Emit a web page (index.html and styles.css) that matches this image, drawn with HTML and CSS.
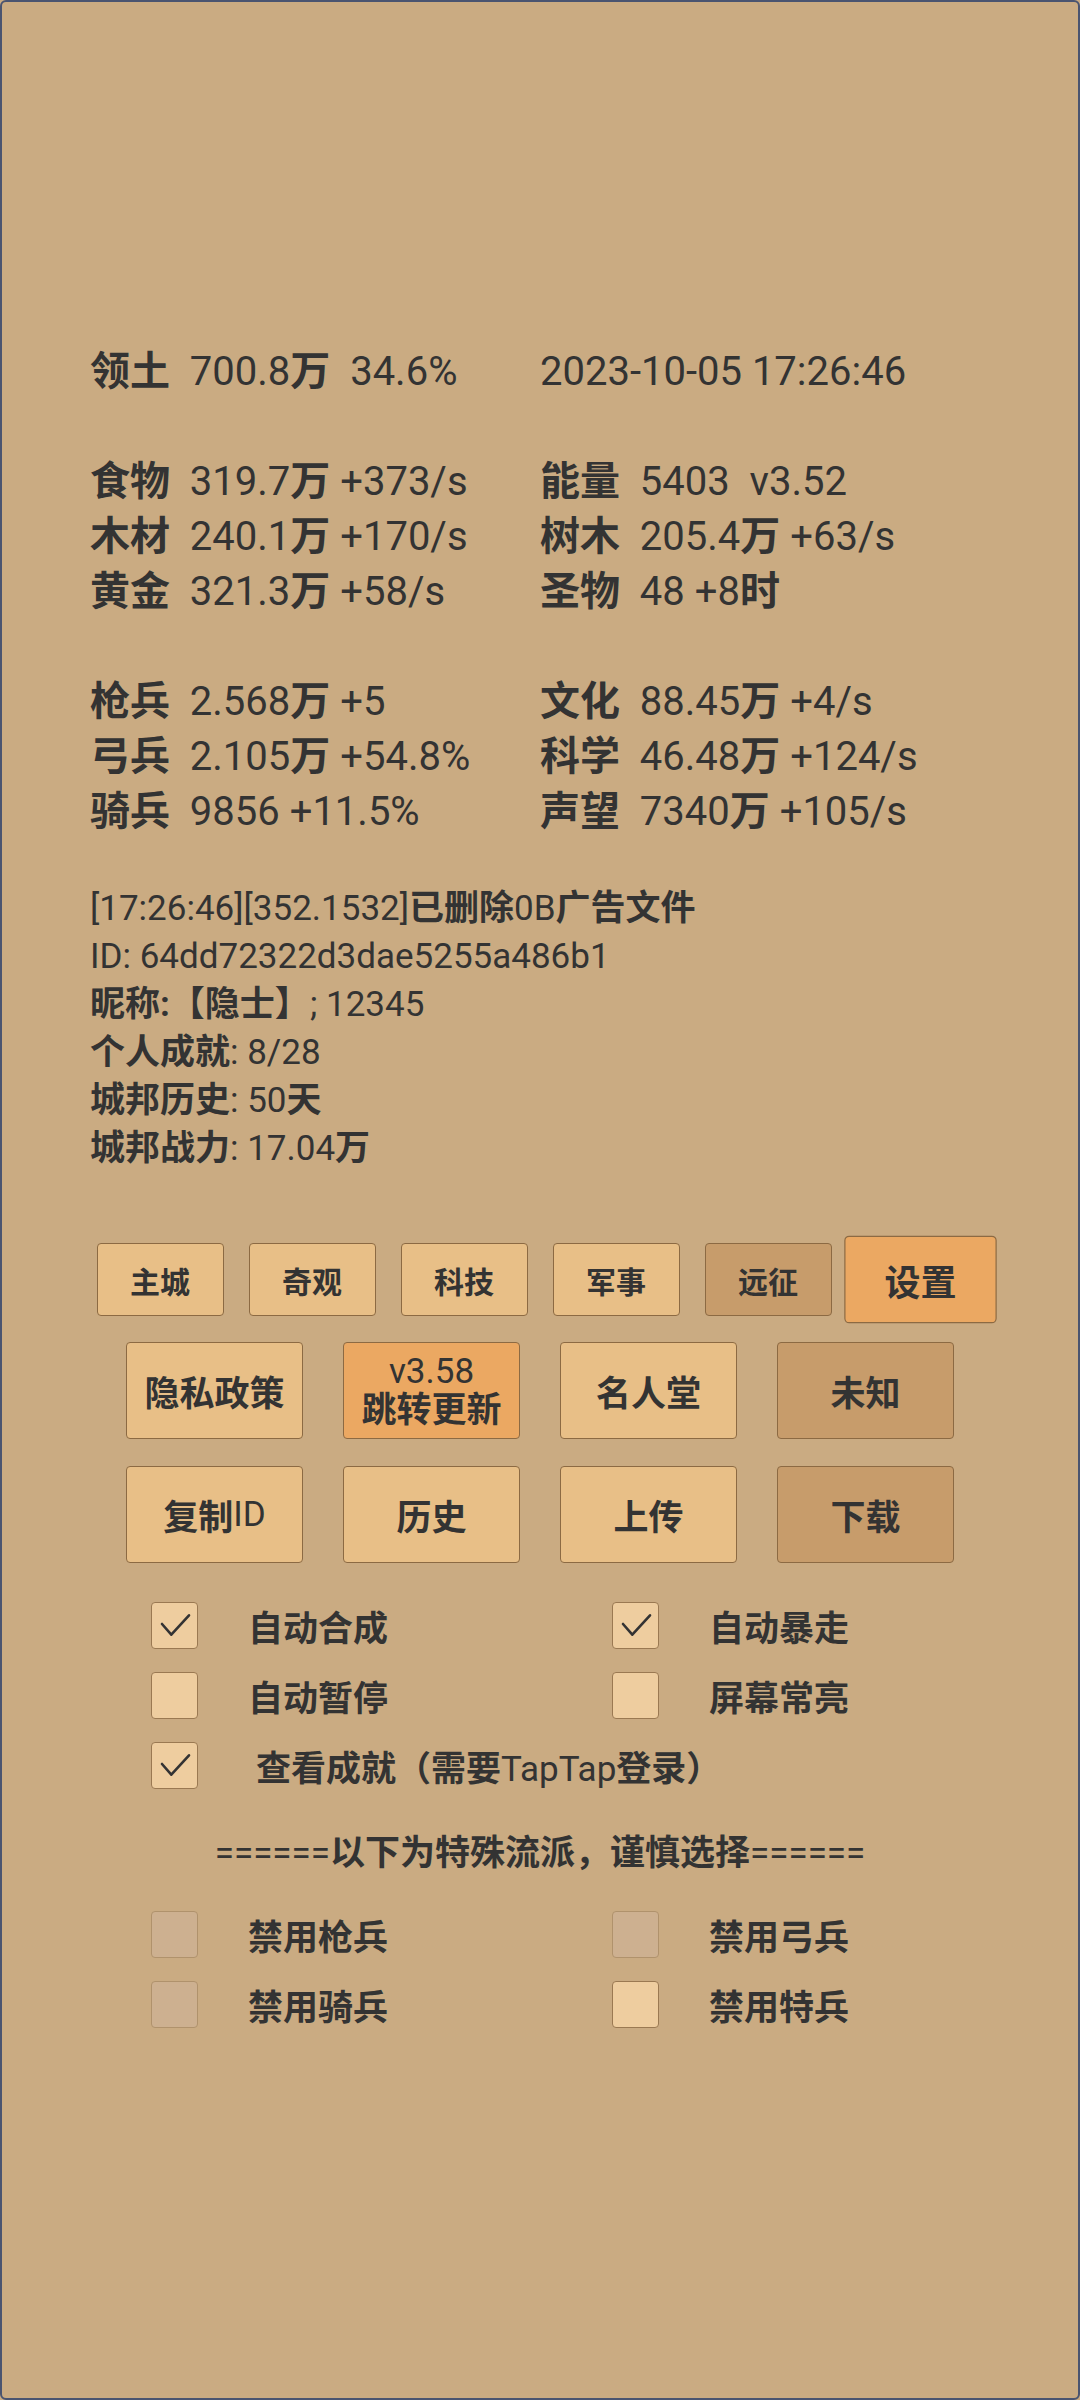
FILE: index.html
```html
<!DOCTYPE html>
<html lang="zh-CN">
<head>
<meta charset="utf-8">
<title>城邦</title>
<link rel="stylesheet" href="styles.css">
</head>
<body>
<div class="screen">
  <div class="stats">
    <div class="row"><div class="cell"><span class="zh">领土</span>  700.8<span class="zh">万</span>  34.6%</div><div class="cell">2023-10-05 17:26:46</div></div>
    <div class="row"></div>
    <div class="row"><div class="cell"><span class="zh">食物</span>  319.7<span class="zh">万</span> +373/s</div><div class="cell"><span class="zh">能量</span>  5403  v3.52</div></div>
    <div class="row"><div class="cell"><span class="zh">木材</span>  240.1<span class="zh">万</span> +170/s</div><div class="cell"><span class="zh">树木</span>  205.4<span class="zh">万</span> +63/s</div></div>
    <div class="row"><div class="cell"><span class="zh">黄金</span>  321.3<span class="zh">万</span> +58/s</div><div class="cell"><span class="zh">圣物</span>  48 +8<span class="zh">时</span></div></div>
    <div class="row"></div>
    <div class="row"><div class="cell"><span class="zh">枪兵</span>  2.568<span class="zh">万</span> +5</div><div class="cell"><span class="zh">文化</span>  88.45<span class="zh">万</span> +4/s</div></div>
    <div class="row"><div class="cell"><span class="zh">弓兵</span>  2.105<span class="zh">万</span> +54.8%</div><div class="cell"><span class="zh">科学</span>  46.48<span class="zh">万</span> +124/s</div></div>
    <div class="row"><div class="cell"><span class="zh">骑兵</span>  9856 +11.5%</div><div class="cell"><span class="zh">声望</span>  7340<span class="zh">万</span> +105/s</div></div>
  </div>

  <div class="log">
    <div class="logline">[17:26:46][352.1532]<span class="zh">已删除</span>0B<span class="zh">广告文件</span></div>
    <div class="logline">ID: 64dd72322d3dae5255a486b1</div>
    <div class="logline"><span class="zh">昵称:【隐士】</span>; 12345</div>
    <div class="logline"><span class="zh">个人成就</span>: 8/28</div>
    <div class="logline"><span class="zh">城邦历史</span>: 50<span class="zh">天</span></div>
    <div class="logline"><span class="zh">城邦战力</span>: 17.04<span class="zh">万</span></div>
  </div>

  <div class="tabs">
    <div class="btn tab">主城</div>
    <div class="btn tab">奇观</div>
    <div class="btn tab">科技</div>
    <div class="btn tab">军事</div>
    <div class="btn tab dark">远征</div>
    <div class="btn tab active">设置</div>
  </div>

  <div class="btnrow first">
    <div class="btn big">隐私政策</div>
    <div class="btn big orange upd"><span class="ver">v3.58</span><span>跳转更新</span></div>
    <div class="btn big">名人堂</div>
    <div class="btn big dark">未知</div>
  </div>
  <div class="btnrow second">
    <div class="btn big">复制<span class="lat">ID</span></div>
    <div class="btn big">历史</div>
    <div class="btn big">上传</div>
    <div class="btn big dark">下载</div>
  </div>

  <div class="opts first">
    <div class="opt"><div class="box"><svg class="tick" viewBox="0 0 45 45"><polyline points="10,21 19.3,31.7 37,12.3"/></svg></div><span>自动合成</span></div>
    <div class="opt"><div class="box"><svg class="tick" viewBox="0 0 45 45"><polyline points="10,21 19.3,31.7 37,12.3"/></svg></div><span>自动暴走</span></div>
    <div class="opt"><div class="box"></div><span>自动暂停</span></div>
    <div class="opt"><div class="box"></div><span>屏幕常亮</span></div>
    <div class="opt wide"><div class="box"><svg class="tick" viewBox="0 0 45 45"><polyline points="10,21 19.3,31.7 37,12.3"/></svg></div><span>查看成就（需要<span class="lat">TapTap</span>登录）</span></div>
  </div>

  <div class="divider"><span class="lat">======</span>以下为特殊流派，谨慎选择<span class="lat">======</span></div>

  <div class="opts second">
    <div class="opt"><div class="box off"></div><span>禁用枪兵</span></div>
    <div class="opt"><div class="box off"></div><span>禁用弓兵</span></div>
    <div class="opt"><div class="box off"></div><span>禁用骑兵</span></div>
    <div class="opt"><div class="box"></div><span>禁用特兵</span></div>
  </div>
</div>
</body>
</html>
```

FILE: styles.css
```css
html, body {
  margin: 0;
  padding: 0;
}

body {
  background: #caab82;
  font-family: Roboto, "Noto Sans CJK SC", sans-serif;
  color: #333333;
}

.screen {
  width: 1080px;
  height: 2400px;
  box-sizing: border-box;
  border: 2px solid #4a5470;
  border-radius: 6px;
  background: #caab82;
  padding-top: 342px;
  overflow: hidden;
}

.zh {
  font-weight: 700;
}

.lat {
  font-weight: 400;
}

.stats {
  margin-left: 88px;
  font-size: 40px;
  line-height: 55px;
}

.row {
  display: grid;
  grid-template-columns: 450px auto;
  height: 55px;
}

.cell {
  white-space: pre;
}

.log {
  margin-left: 88px;
  margin-top: 46px;
  font-size: 35px;
  line-height: 48px;
}

.logline {
  height: 48px;
  white-space: nowrap;
}

.tabs {
  display: flex;
  justify-content: center;
  gap: 25px;
  margin-top: 70px;
}

.btn {
  box-sizing: border-box;
  border: 1.5px solid #8c6a43;
  border-radius: 4px;
  background: #e8bf87;
  display: flex;
  align-items: center;
  justify-content: center;
  font-weight: 700;
  text-align: center;
  color: #333333;
}

.tab {
  width: 127px;
  height: 73px;
  font-size: 30px;
}

.tab.active {
  transform: scale(1.2);
  background: #eba862;
}

.dark {
  background: #c79c6b;
}

.orange {
  background: #eba862;
}

.btnrow {
  display: flex;
  justify-content: center;
  gap: 40px;
}

.btnrow.first {
  margin-top: 26px;
}

.btnrow.second {
  margin-top: 27px;
}

.big {
  width: 177px;
  height: 97px;
  font-size: 35px;
}

.upd {
  flex-direction: column;
  line-height: 39px;
}

.upd .ver {
  font-weight: 400;
}

.opts {
  display: grid;
  grid-template-columns: 461px auto;
  row-gap: 23px;
  padding-left: 149px;
}

.opts.first {
  margin-top: 39px;
}

.opts.second {
  margin-top: 33px;
}

.opt {
  display: flex;
  align-items: center;
  gap: 50px;
  height: 47px;
  font-size: 35px;
  font-weight: 700;
}

.opt.wide {
  grid-column: 1 / span 2;
  gap: 58px;
}

.box {
  flex: none;
  width: 47px;
  height: 47px;
  box-sizing: border-box;
  border: 1px solid #9a7952;
  border-radius: 4px;
  background: #eecd9f;
}

.box.off {
  background: #cdb090;
  border-color: #b0926c;
}

.tick {
  display: block;
  width: 45px;
  height: 45px;
}

.tick polyline {
  fill: none;
  stroke: #333333;
  stroke-width: 2.6;
  stroke-linecap: round;
  stroke-linejoin: round;
}

.divider {
  margin-top: 41px;
  text-align: center;
  font-size: 35px;
  line-height: 48px;
  font-weight: 700;
}
```
